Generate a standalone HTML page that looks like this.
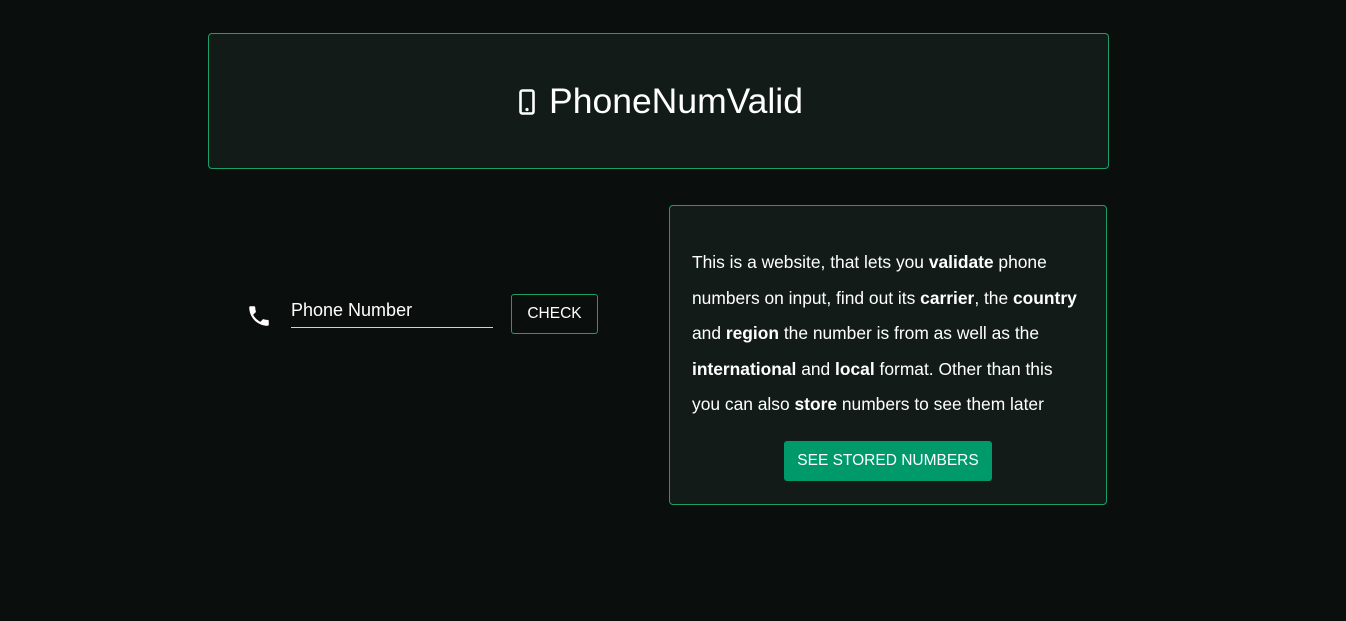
<!DOCTYPE html>
<html><head><meta charset="utf-8"><style>
html,body{margin:0;padding:0;background:#0a0f0d;width:1346px;height:621px;overflow:hidden;font-family:"Liberation Sans",sans-serif;color:#fff}
.hdr{position:absolute;left:208px;top:33px;width:901px;height:136px;border:1px solid #1c9e6b;border-radius:4px;background:#121b18;box-sizing:border-box}
.title{position:absolute;left:0;right:0;top:80px;text-align:center;font-size:35.5px;line-height:42px;padding-right:24px}
.title svg{vertical-align:-2px;margin-right:14px}
.info{position:absolute;left:669px;top:205px;width:438px;height:300px;border:1px solid #1c9e6b;border-radius:4px;background:#121b18;box-sizing:border-box}
.txt{position:absolute;left:692px;top:245px;font-size:17.4px;line-height:35.5px;white-space:nowrap}
.btn{position:absolute;left:784px;top:441px;width:208px;height:40px;background:#00996a;border-radius:3px;font-size:15.5px;text-align:center;line-height:40px}
.check{position:absolute;left:511px;top:294px;width:87px;height:40px;border:1px solid #1c9e6b;border-radius:3px;box-sizing:border-box;font-size:15.5px;text-align:center;line-height:38px}
.lbl{position:absolute;left:291px;top:300px;font-size:18px}
.ul{position:absolute;left:291px;top:327px;width:202px;height:1px;background:#cfd3d1}
</style></head><body>
<div class="hdr"></div>
<div class="title"><svg width="16" height="26" viewBox="0 0 16 26"><rect x="1.5" y="1.5" width="13" height="23" rx="2" fill="none" stroke="#fff" stroke-width="2.6"/><circle cx="8" cy="20.5" r="1.6" fill="#fff"/></svg>PhoneNumValid</div>
<svg style="position:absolute;left:246px;top:303px" width="26" height="26" viewBox="0 0 24 24"><path fill="#fff" d="M6.6 10.8c1.4 2.8 3.8 5.1 6.6 6.6l2.2-2.2c.3-.3.7-.4 1-.2 1.1.4 2.3.6 3.6.6.6 0 1 .4 1 1V20c0 .6-.4 1-1 1C10.6 21 3 13.4 3 4c0-.6.4-1 1-1h3.5c.6 0 1 .4 1 1 0 1.3.2 2.5.6 3.6.1.3 0 .7-.2 1L6.6 10.8z"/></svg>
<div class="lbl">Phone Number</div>
<div class="ul"></div>
<div class="check">CHECK</div>
<div class="info"></div>
<div class="txt">This is a website, that lets you <b>validate</b> phone<br>numbers on input, find out its <b>carrier</b>, the <b>country</b><br>and <b>region</b> the number is from as well as the<br><b>international</b> and <b>local</b> format. Other than this<br>you can also <b>store</b> numbers to see them later</div>
<div class="btn">SEE STORED NUMBERS</div>
</body></html>
